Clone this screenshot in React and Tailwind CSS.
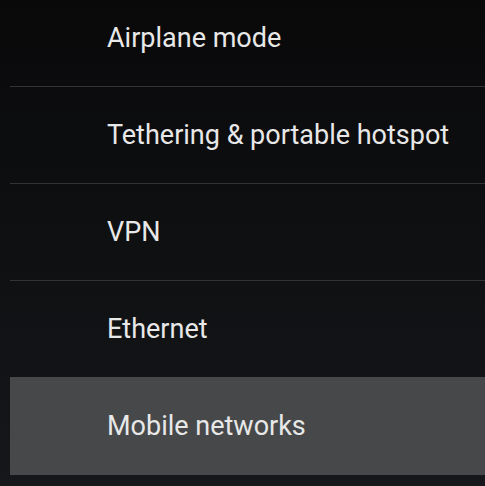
const items = ["Airplane mode", "Tethering & portable hotspot", "VPN", "Ethernet"]

export default function App() {
    return (
        <div
            className="h-[486px] w-[485px] overflow-hidden bg-gradient-to-b from-[#09090a] to-[#15171a] text-[#e8e8e8]"
            style={{ fontFamily: "Roboto, 'Noto Sans', sans-serif" }}
        >
            <div className="-mt-[10px] flex flex-col">
                {items.map((label) => (
                    <div key={label} className="flex flex-col">
                        <div className="flex h-[96px] items-center pl-[107px] text-[27px] leading-none">
                            {label}
                        </div>
                        <div className="ml-[10px] h-px bg-[#323334]" />
                    </div>
                ))}
                <div className="-mt-px ml-[10px] flex h-[98px] items-center bg-[#46484a] pl-[97px] text-[27px] leading-none">
                    Mobile networks
                </div>
            </div>
        </div>
    )
}
